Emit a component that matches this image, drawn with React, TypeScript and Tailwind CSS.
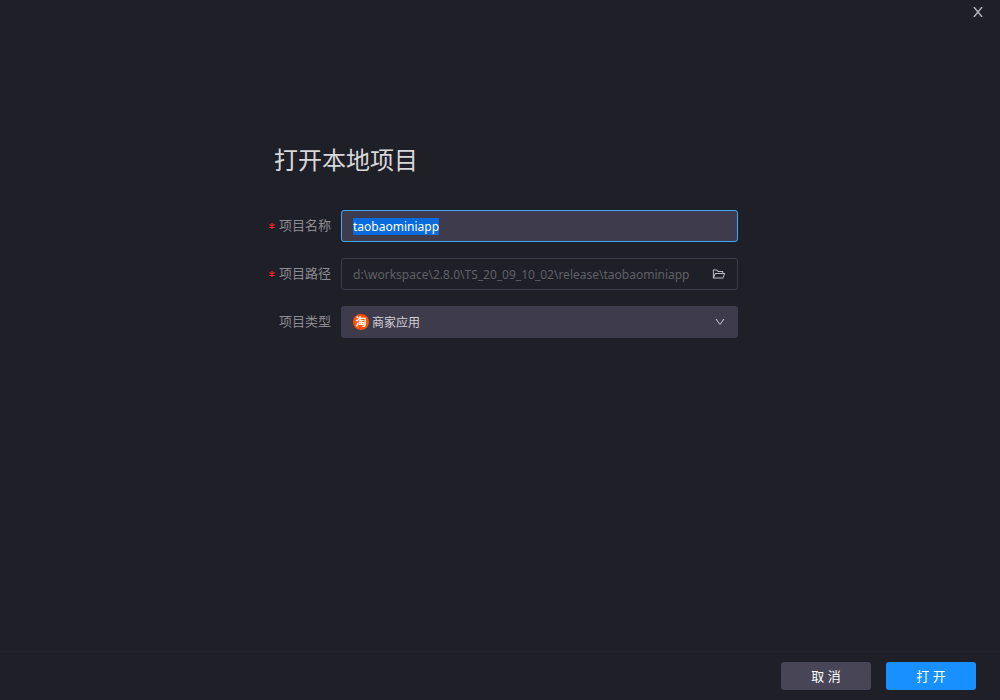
import { useEffect, useRef, useState } from 'react';
import type { ReactNode } from 'react';
import { AiOutlineDown, AiOutlineFolderOpen } from 'react-icons/ai';

type FieldProps = {
  id: string;
  label: string;
  required?: boolean;
  children: ReactNode;
};

function Field({ id, label, required = false, children }: FieldProps) {
  return (
    <div className="flex h-8 items-center gap-2.5">
      <label
        htmlFor={id}
        className="flex w-[69px] shrink-0 items-center justify-end gap-1 pb-0.5 text-[13px] leading-5 text-[#8c8c92]"
      >
        {required && (
          <svg viewBox="0 0 6 6" className="mt-0.5 size-1.5" aria-hidden="true">
            <path d="M3 0v6M0.4 1.5l5.2 3M0.4 4.5l5.2-3" stroke="#ff222d" strokeWidth="1.2" />
          </svg>
        )}
        <span>{label}</span>
      </label>
      <div className="relative h-full min-w-0 flex-1">{children}</div>
    </div>
  );
}

function TaoBadge() {
  return (
    <span className="flex size-4 items-center justify-center rounded-full bg-[#ff5000] text-[11px] leading-4 font-bold text-white">
      淘
    </span>
  );
}

export default function App() {
  const nameRef = useRef<HTMLInputElement>(null);
  const [name, setName] = useState('taobaominiapp');

  useEffect(() => {
    nameRef.current?.focus();
    nameRef.current?.select();
  }, []);

  return (
    <div className="flex min-h-screen flex-col bg-[#1f1f28] font-['Noto_Sans','Noto_Sans_CJK_SC',sans-serif]">
      <header className="flex h-6 shrink-0 justify-end px-4">
        <button type="button" aria-label="关闭" className="flex w-3 items-center justify-center text-[#b8b8bc]">
          <svg viewBox="0 0 10 10" className="size-2.5" aria-hidden="true">
            <path d="M.9 0l8.2 10M9.1 0l-8.2 10" stroke="currentColor" strokeWidth="1.4" />
          </svg>
        </button>
      </header>

      <main className="flex-1 pt-[118px]">
        <form id="open-project" className="mx-auto w-full max-w-[476px]" onSubmit={(e) => e.preventDefault()}>
          <h1 className="mb-8 pl-3 text-2xl leading-9 text-[#d8d8da]">打开本地项目</h1>
          <div className="flex flex-col gap-4">
            <Field id="name" label="项目名称" required>
              <input
                id="name"
                ref={nameRef}
                value={name}
                onChange={(e) => setName(e.target.value)}
                className="h-full w-full rounded-[3px] border border-[#40a9ff] bg-[#3e3b4d] px-[11px] text-xs text-[#d2d2d4] outline-none selection:bg-[#0a6cdc] selection:text-white"
              />
            </Field>
            <Field id="path" label="项目路径" required>
              <input
                id="path"
                disabled
                value={'d:\\workspace\\2.8.0\\TS_20_09_10_02\\release\\taobaominiapp'}
                className="h-full w-full rounded-[3px] border border-[#3e3b4d] bg-transparent pr-8 pl-[11px] text-xs text-[#606066]"
              />
              <button
                type="button"
                aria-label="选择文件夹"
                className="absolute inset-y-0 right-3 flex items-center text-[#bcbcc0]"
              >
                <AiOutlineFolderOpen className="size-3.5" />
              </button>
            </Field>
            <Field id="type" label="项目类型">
              <select
                id="type"
                className="h-full w-full appearance-none rounded-[3px] bg-[#3e3b4d] pt-0.5 pr-8 pl-[31px] text-xs text-[#d2d2d4] outline-none"
              >
                <option>商家应用</option>
              </select>
              <span className="pointer-events-none absolute inset-y-0 left-3 flex items-center">
                <TaoBadge />
              </span>
              <span className="pointer-events-none absolute inset-y-0 right-3 flex items-center text-[#bcbcc0]">
                <AiOutlineDown className="size-3" />
              </span>
            </Field>
          </div>
        </form>
      </main>

      <footer className="flex justify-end gap-[15px] border-t border-[#22222b] px-6 py-2.5">
        <button type="button" className="h-7 w-[90px] rounded-[3px] bg-[#474556] pt-0.5 text-[13px] text-white">
          取 消
        </button>
        <button
          type="submit"
          form="open-project"
          className="h-7 w-[90px] rounded-[3px] bg-[#1890ff] pt-0.5 text-[13px] text-white"
        >
          打 开
        </button>
      </footer>
    </div>
  );
}
